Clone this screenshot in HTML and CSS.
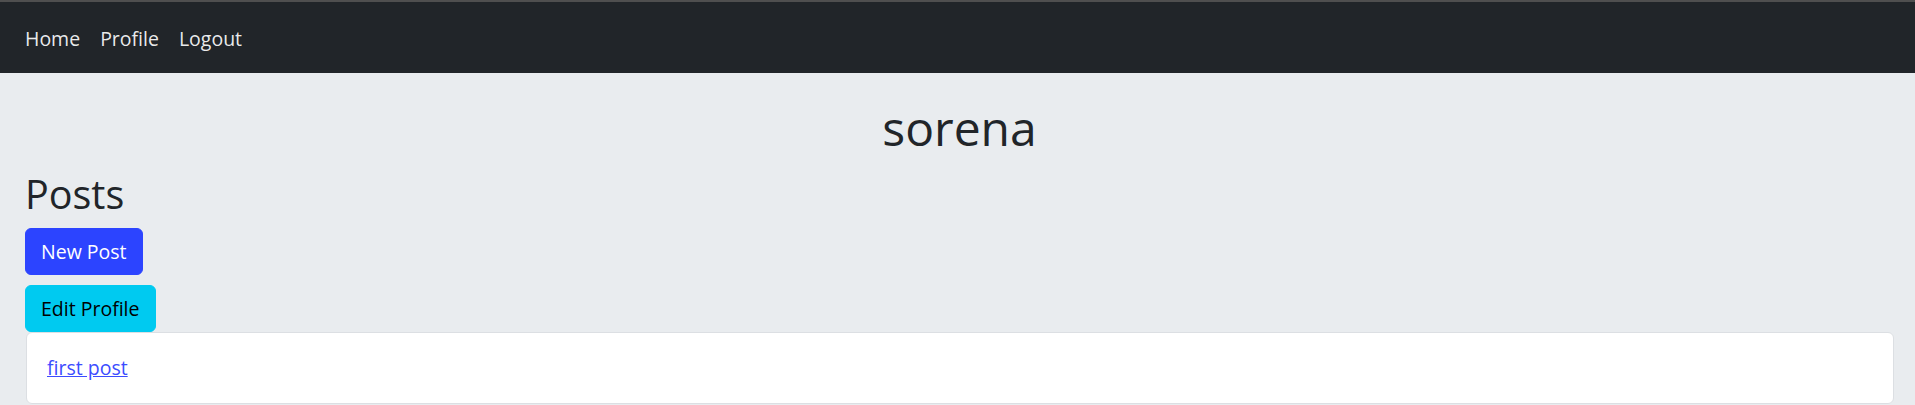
FILE: index.html
```html
<!DOCTYPE html>
<html lang="en">
<head>
<meta charset="utf-8">
<title>sorena</title>
<link rel="stylesheet" href="styles.css">
</head>
<body>
<nav class="navbar">
  <a class="nav-link" href="#">Home</a>
  <a class="nav-link" href="#">Profile</a>
  <a class="nav-link" href="#">Logout</a>
</nav>
<main class="content">
  <h1 class="username">sorena</h1>
  <h2 class="section-title">Posts</h2>
  <div class="actions">
    <a class="btn btn-primary" href="#">New Post</a>
    <a class="btn btn-info" href="#">Edit Profile</a>
  </div>
  <div class="card">
    <a class="post-link" href="#">first post</a>
  </div>
</main>
</body>
</html>
```

FILE: styles.css
```css
html, body {
  margin: 0;
  padding: 0;
}
body {
  background: #e9ecef;
  font-family: "Open Sans", "Noto Sans", sans-serif;
  font-size: 19.5px;
  color: #212529;
  border-top: 2px solid #4f4f4f;
}
.navbar {
  height: 71px;
  box-sizing: border-box;
  padding-top: 2px;
  background: #212529;
  display: flex;
  align-items: center;
  padding-left: 15px;
}
.nav-link {
  color: rgba(255, 255, 255, 0.92);
  text-decoration: none;
  padding: 0 10px;
  line-height: 30px;
}
.content {
  padding: 0 21px 0 25px;
  display: flex;
  flex-direction: column;
}
.username {
  margin: 27px 0 0;
  text-align: center;
  font-size: 48px;
  font-weight: 400;
  line-height: 56px;
}
.section-title {
  margin: 15px 0 0;
  font-size: 39.5px;
  font-weight: 400;
  line-height: 46px;
}
.actions {
  display: flex;
  flex-direction: column;
  align-items: flex-start;
  gap: 10px;
  margin-top: 11px;
}
.btn {
  display: inline-block;
  height: 47px;
  box-sizing: border-box;
  padding: 0 15px;
  line-height: 45px;
  border: 1px solid transparent;
  border-radius: 6px;
  text-decoration: none;
  font-size: 19.5px;
}
.btn-primary {
  background: #2c44ff;
  border-color: #2c44ff;
  color: #fff;
}
.btn-info {
  background: #00caf0;
  border-color: #00caf0;
  color: #000;
}
.card {
  margin-left: 1px;
  background: #fff;
  border: 1px solid #dcdfe3;
  border-radius: 6px;
  padding: 20px;
  line-height: 30px;
}
.post-link {
  color: #3b4cff;
  text-decoration: underline;
}
```
